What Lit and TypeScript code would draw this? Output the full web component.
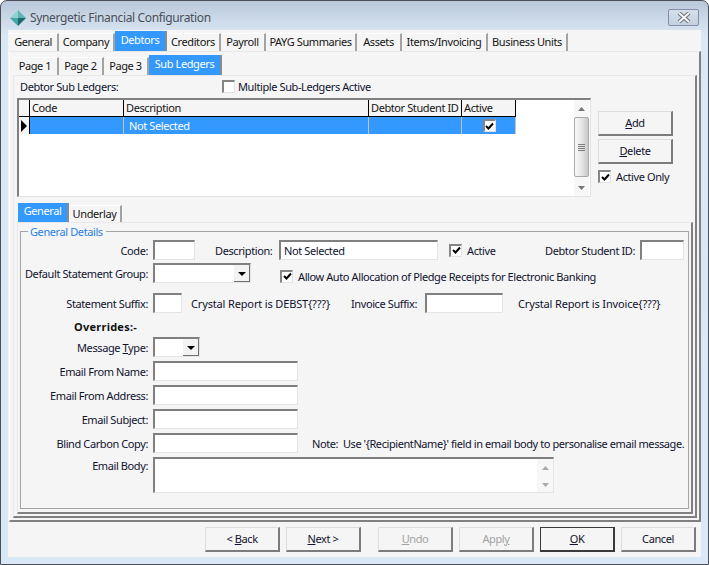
import { LitElement, html, css } from "lit";
import { customElement } from "lit/decorators.js";

const mainTabs = [
  { label: "General", w: 50 },
  { label: "Company", w: 56 },
  { label: "Debtors", w: 52, active: true },
  { label: "Creditors", w: 54 },
  { label: "Payroll", w: 45 },
  { label: "PAYG Summaries", w: 91 },
  { label: "Assets", w: 45 },
  { label: "Items/Invoicing", w: 86 },
  { label: "Business Units", w: 80 },
];

const subTabs = [
  { label: "Page 1", w: 46 },
  { label: "Page 2", w: 45 },
  { label: "Page 3", w: 45 },
  { label: "Sub Ledgers", w: 73, active: true },
];

const detailTabs = [
  { label: "General", w: 51, active: true },
  { label: "Underlay", w: 53 },
];

const tick = html`<svg viewBox="0 0 9 9" width="9" height="9">
  <path d="M1 4 L3.5 6.5 L8 1.5" fill="none" stroke="#000" stroke-width="2"></path>
</svg>`;

const upArrow = html`<svg viewBox="0 0 7 4" width="7" height="4"><path d="M3.5 0 L7 4 H0 Z" fill="currentColor"></path></svg>`;
const downArrow = html`<svg viewBox="0 0 7 4" width="7" height="4"><path d="M0 0 H7 L3.5 4 Z" fill="currentColor"></path></svg>`;

@customElement("app-root")
export class AppRoot extends LitElement {
  check(on: boolean) {
    return html`<span class="check">${on ? tick : ""}</span>`;
  }

  tabs(items: { label: string; w: number; active?: boolean }[], cls = "") {
    return html`<div class="tabs ${cls}">
      ${items.map(
        (t) => html`<div class="tab ${t.active ? "active" : ""}" style="width:${t.w}px">${t.label}</div>`
      )}
    </div>`;
  }

  select(cls: string) {
    return html`<div class="box select ${cls}">
      <span class="drop"><i></i></span>
    </div>`;
  }

  render() {
    return html`
      <div class="window">
        <div class="title">
          <svg class="logo" viewBox="0 0 16 16" width="16" height="16">
            <path d="M8 0 L0 8 L8 8 Z" fill="#8fd0d0"></path>
            <path d="M8 0 L16 8 L8 8 Z" fill="#5fb3b5"></path>
            <path d="M0 8 L8 16 L8 8 Z" fill="#45a3a3"></path>
            <path d="M16 8 L8 16 L8 8 Z" fill="#1c6a6c"></path>
          </svg>
          <span class="title-text">Synergetic Financial Configuration</span>
          <div class="close">
            <svg viewBox="0 0 14 11" width="14" height="11">
              <path d="M2 1 L12 10 M12 1 L2 10" stroke="#6b6f78" stroke-width="4"></path>
              <path d="M2 1 L12 10 M12 1 L2 10" stroke="#f4f6f8" stroke-width="2"></path>
            </svg>
          </div>
        </div>

        <div class="client">
          ${this.tabs(mainTabs, "main-tabs")}
          <div class="panel outer">
            ${this.tabs(subTabs, "sub-tabs")}
            <div class="panel page">
              <div class="ledger-head">
                <span class="ledger-label">Debtor Sub Ledgers:</span>
                <label class="chk multi">${this.check(false)}<span>Multiple Sub-Ledgers Active</span></label>
              </div>

              <div class="ledger">
                <div class="grid-wrap">
                  <div class="grid">
                    <div class="head corner"></div>
                    <div class="head">Code</div>
                    <div class="head">Description</div>
                    <div class="head">Debtor Student ID</div>
                    <div class="head">Active</div>
                    <div class="indicator"><i></i></div>
                    <div class="cell"></div>
                    <div class="cell">Not Selected</div>
                    <div class="cell"></div>
                    <div class="cell centre">${this.check(true)}</div>
                  </div>
                  <div class="vscroll">
                    <span class="arrow">${upArrow}</span>
                    <div class="thumb"><i></i><i></i><i></i><i></i></div>
                    <span class="arrow">${downArrow}</span>
                  </div>
                </div>
                <div class="side">
                  <button class="btn"><u>A</u>dd</button>
                  <button class="btn"><u>D</u>elete</button>
                  <label class="chk active-only">${this.check(true)}<span>Active Only</span></label>
                </div>
              </div>

              ${this.tabs(detailTabs, "detail-tabs")}
              <div class="panel detail">
                <fieldset>
                  <legend>General Details</legend>
                  <div class="form">
                    <div class="row">
                      <span class="lbl">Code:</span>
                      <div class="box w-code"></div>
                      <span class="desc-lbl">Description:</span>
                      <div class="box w-desc">Not Selected</div>
                      <label class="chk row-active">${this.check(true)}<span>Active</span></label>
                      <span class="student-lbl">Debtor Student ID:</span>
                      <div class="box w-student"></div>
                    </div>
                    <div class="row tight">
                      <span class="lbl">Default Statement Group:</span>
                      ${this.select("w-group")}
                      <label class="chk pledge">${this.check(true)}<span>Allow Auto Allocation of Pledge Receipts for Electronic Banking</span></label>
                    </div>
                    <div class="row suffix">
                      <span class="lbl">Statement Suffix:</span>
                      <div class="box w-suffix"></div>
                      <span class="crystal">Crystal Report is DEBST{???}</span>
                      <span class="inv-lbl">Invoice Suffix:</span>
                      <div class="box w-inv"></div>
                      <span class="crystal-inv">Crystal Report is Invoice{???}</span>
                    </div>
                    <div class="overrides">Overrides:-</div>
                    <div class="row">
                      <span class="lbl">Message <u>T</u>ype:</span>
                      ${this.select("w-type")}
                    </div>
                    <div class="row">
                      <span class="lbl">Email From Name:</span>
                      <div class="box w-mail"></div>
                    </div>
                    <div class="row">
                      <span class="lbl">Email From Address:</span>
                      <div class="box w-mail"></div>
                    </div>
                    <div class="row">
                      <span class="lbl">Email Subject:</span>
                      <div class="box w-mail"></div>
                    </div>
                    <div class="row">
                      <span class="lbl">Blind Carbon Copy:</span>
                      <div class="box w-mail"></div>
                      <span class="note">Note:&nbsp; Use '{RecipientName}' field in email body to personalise email message.</span>
                    </div>
                    <div class="row body-row">
                      <span class="lbl">Email Body:</span>
                      <div class="box w-body">
                        <div class="memo-scroll">
                          <span class="arrow">${upArrow}</span>
                          <span class="arrow">${downArrow}</span>
                        </div>
                      </div>
                    </div>
                  </div>
                </fieldset>
              </div>
            </div>
          </div>

          <div class="footer">
            <button class="btn">&lt; <u>B</u>ack</button>
            <button class="btn"><u>N</u>ext &gt;</button>
            <button class="btn off undo"><u>U</u>ndo</button>
            <button class="btn off">Appl<u>y</u></button>
            <button class="btn default"><u>O</u>K</button>
            <button class="btn">Cancel</button>
          </div>
        </div>
      </div>
    `;
  }

  static styles = css`
    :host {
      display: block;
      width: 709px;
      height: 565px;
      font: 11px "Noto Sans", Roboto, Arial, sans-serif;
      letter-spacing: -0.4px;
      color: #10122e;
    }

    * {
      box-sizing: border-box;
    }

    .window {
      width: 709px;
      height: 565px;
      border: 1px solid #4c4f55;
      border-radius: 7px 7px 0 0;
      padding: 0 7px 7px;
      display: flex;
      flex-direction: column;
      background: linear-gradient(#b9c8da, #dae7f4 34px, #d9e8f7);
    }

    .title {
      height: 29px;
      flex: none;
      display: flex;
      align-items: center;
      padding-left: 2px;
    }

    .logo {
      margin: 5px 4px 0 0;
    }

    .title-text {
      font: 12px "Noto Sans", Arial, sans-serif;
      letter-spacing: -0.35px;
      color: #4a4f57;
      margin-top: 4px;
    }

    .close {
      margin: 4px 2px 0 auto;
      width: 31px;
      height: 17px;
      border: 1px solid #868da9;
      border-radius: 2px;
      background: linear-gradient(#d5dfea, #c3d0df);
      display: flex;
      align-items: center;
      justify-content: center;
    }

    .client {
      flex: 1;
      padding-top: 1px;
      background: #f5f5f5;
      display: flex;
      flex-direction: column;
    }

    .tabs {
      display: flex;
      align-items: flex-end;
      flex: none;
    }

    .tab {
      height: 18px;
      border-right: 2px solid #a3a3a3;
      border-top: 1px solid #fff;
      text-align: center;
      line-height: 16px;
      color: #141414;
      white-space: nowrap;
    }

    .tab.active {
      height: 20px;
      line-height: 18px;
      background: #3399ff;
      color: #fff;
      border-top: 0;
      border-right-color: #8a8a8a;
    }

    .main-tabs {
      height: 20px;
      padding-left: 1px;
    }

    .sub-tabs {
      height: 20px;
    }

    .detail-tabs {
      height: 19px;
      margin-top: 6px;
      padding-left: 1px;
    }

    .detail-tabs .tab {
      height: 17px;
      line-height: 15px;
    }

    .detail-tabs .tab.active {
      height: 19px;
      line-height: 16px;
    }

    .panel {
      border-top: 1px solid #fff;
      border-left: 1px solid #fff;
      border-right: 2px solid #808080;
      border-bottom: 2px solid #808080;
      display: flex;
      flex-direction: column;
    }

    .outer {
      height: 471px;
      flex: none;
      margin-left: 1px;
      padding: 3px 2px 2px 3px;
      border-top-color: #e8e8e8;
    }

    .page {
      flex: 1;
      padding: 0 2px 2px 3px;
      border-top-color: #e8e8e8;
      border-left-color: #e8e8e8;
    }

    .detail {
      flex: 1;
      padding: 0 2px 3px 2px;
      border-top-color: #e8e8e8;
      border-left-color: #e8e8e8;
    }

    .ledger-head {
      height: 22px;
      flex: none;
      display: flex;
      align-items: center;
      padding-bottom: 2px;
    }

    .ledger-label {
      width: 205px;
      padding-left: 3px;
    }

    .chk {
      display: flex;
      align-items: center;
      gap: 4px;
      white-space: nowrap;
    }

    .multi {
      gap: 3px;
    }

    .check {
      width: 13px;
      height: 13px;
      flex: none;
      background: #fff;
      border-top: 2px solid #858585;
      border-left: 2px solid #858585;
      border-right: 1px solid #e2e2e2;
      border-bottom: 1px solid #e2e2e2;
      display: flex;
      align-items: center;
      justify-content: center;
    }

    .ledger {
      height: 99px;
      flex: none;
      display: flex;
    }

    .grid-wrap {
      width: 574px;
      background: #fff;
      border-top: 2px solid #808080;
      border-left: 2px solid #808080;
      border-right: 1px solid #e2e2e2;
      border-bottom: 1px solid #e2e2e2;
      display: flex;
      justify-content: space-between;
    }

    .grid {
      display: grid;
      grid-template-columns: 11px 94px 245px 93px 54px;
      grid-template-rows: 17px 17px;
      align-content: start;
    }

    .head {
      background: #f5f5f5;
      border-right: 1px solid #000;
      border-bottom: 1px solid #000;
      padding-left: 2px;
      line-height: 16px;
      color: #141414;
      white-space: nowrap;
    }

    .indicator {
      background: #f5f5f5;
      border-right: 1px solid #000;
      display: flex;
      align-items: center;
      justify-content: center;
    }

    .indicator i {
      border-left: 6px solid #000;
      border-top: 6px solid transparent;
      border-bottom: 6px solid transparent;
    }

    .cell {
      background: #3399ff;
      color: #fff;
      border-right: 1px solid #c2c2c2;
      padding-left: 5px;
      line-height: 18px;
    }

    .centre {
      display: flex;
      align-items: center;
      justify-content: center;
      padding: 0 0 0 1px;
    }

    .vscroll {
      width: 15px;
      margin-right: 1px;
      display: flex;
      flex-direction: column;
      align-items: center;
      background: #f7f7f7;
      color: #777;
    }

    .arrow {
      height: 17px;
      flex: none;
      display: flex;
      align-items: center;
      justify-content: center;
    }

    .vscroll .arrow:last-child {
      margin-top: auto;
    }

    .thumb {
      width: 15px;
      height: 60px;
      border: 1px solid #a8a8a8;
      border-radius: 2px;
      background: linear-gradient(90deg, #fafafa, #e6e6e6 50%, #c9c9c9);
      display: flex;
      flex-direction: column;
      align-items: center;
      justify-content: center;
      gap: 1px;
    }

    .thumb i {
      width: 7px;
      height: 1px;
      background: #7d7d7d;
    }

    .side {
      margin: 13px 0 0 7px;
      display: flex;
      flex-direction: column;
      align-items: flex-start;
      gap: 3px;
    }

    .active-only {
      margin-top: 2px;
      gap: 5px;
    }

    .btn {
      width: 75px;
      height: 25px;
      padding: 0 0 2px;
      font: inherit;
      letter-spacing: inherit;
      color: #10122e;
      background: #f5f5f5;
      border-top: 1px solid #dcdcdc;
      border-left: 1px solid #dcdcdc;
      border-right: 2px solid #7c7c7c;
      border-bottom: 2px solid #7c7c7c;
      border-radius: 0;
    }

    .btn.off {
      color: #a2a2a2;
    }

    .btn.default {
      border: 1px solid #3a3a3a;
      border-right-width: 2px;
      border-bottom-width: 2px;
    }

    .undo {
      margin-left: 11px;
    }

    fieldset {
      flex: 1;
      margin: 1px 0 0;
      padding: 0 4px 0 0;
      min-width: 0;
      border: 1px solid #a4a4a4;
    }

    legend {
      margin-left: 7px;
      padding: 0 3px 0 2px;
      color: #2c80e0;
      height: 14px;
      line-height: 16px;
    }

    .form {
      display: flex;
      flex-direction: column;
      gap: 4px;
      margin-top: 2px;
    }

    .row {
      display: flex;
      align-items: center;
      height: 20px;
    }

    .tight {
      margin-top: -1px;
    }

    .suffix {
      margin-top: 6px;
    }

    .lbl {
      width: 127px;
      margin-right: 5px;
      flex: none;
      text-align: right;
      white-space: nowrap;
    }

    .box {
      height: 20px;
      flex: none;
      background: #fff;
      border-top: 2px solid #808080;
      border-left: 2px solid #808080;
      border-right: 1px solid #e4e4e4;
      border-bottom: 1px solid #e4e4e4;
      padding-left: 3px;
      line-height: 17px;
    }

    .w-code {
      width: 42px;
    }

    .desc-lbl {
      margin: 0 7px 0 20px;
      width: 57px;
      white-space: nowrap;
    }

    .w-desc {
      width: 159px;
    }

    .row-active {
      margin-left: 11px;
      gap: 5px;
    }

    .student-lbl {
      margin: 0 5px 0 auto;
      white-space: nowrap;
    }

    .w-student {
      width: 44px;
    }

    .select {
      position: relative;
      padding: 0;
    }

    .drop {
      position: absolute;
      right: 0;
      top: 0;
      bottom: 0;
      width: 16px;
      background: #f3f3f3;
      border-right: 1px solid #707070;
      border-bottom: 1px solid #707070;
      display: flex;
      align-items: center;
      justify-content: center;
    }

    .drop i {
      border-top: 4px solid #000;
      border-left: 4px solid transparent;
      border-right: 4px solid transparent;
      margin-top: 2px;
    }

    .w-group {
      width: 98px;
    }

    .w-type {
      width: 47px;
    }

    .pledge {
      margin: 6px 0 0 29px;
      gap: 5px;
    }

    .w-suffix {
      width: 29px;
    }

    .crystal {
      margin-left: 9px;
      width: 160px;
      white-space: nowrap;
      letter-spacing: -0.15px;
    }

    .inv-lbl {
      width: 69px;
      margin-right: 5px;
      white-space: nowrap;
    }

    .w-inv {
      width: 78px;
    }

    .crystal-inv {
      margin-left: 15px;
      white-space: nowrap;
      letter-spacing: -0.15px;
    }

    .overrides {
      height: 14px;
      line-height: 16px;
      margin: 2px 0 0 53px;
      font-weight: bold;
      letter-spacing: 0.25px;
      color: #111;
    }

    .w-mail {
      width: 145px;
    }

    .note {
      margin-left: 14px;
      white-space: nowrap;
      letter-spacing: -0.42px;
    }

    .body-row {
      align-items: flex-start;
      height: 36px;
    }

    .body-row .lbl {
      line-height: 17px;
    }

    .w-body {
      width: 401px;
      height: 36px;
      position: relative;
      padding: 0;
    }

    .memo-scroll {
      position: absolute;
      right: 0;
      top: 0;
      bottom: 0;
      width: 16px;
      background: #f7f7f7;
      color: #aaa;
      display: flex;
      flex-direction: column;
      justify-content: space-between;
    }

    .footer {
      flex: 1;
      display: flex;
      align-items: flex-start;
      justify-content: flex-end;
      gap: 6px;
      padding: 5px 5px 0 0;
    }
  `;
}
